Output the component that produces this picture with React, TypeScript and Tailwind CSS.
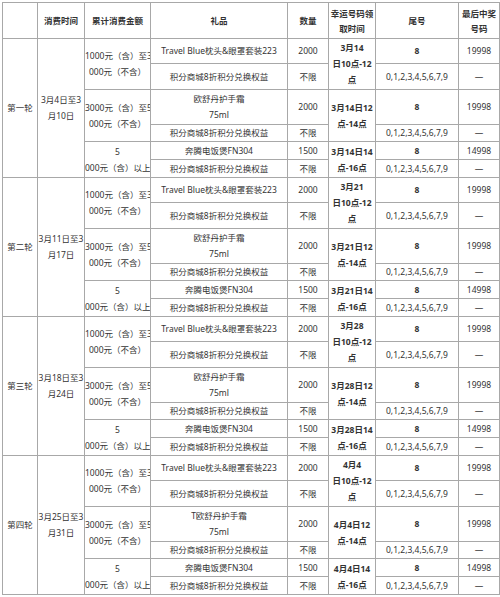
const rounds = [
  {
    name: "第一轮",
    date: ["3月4日至3", "月10日"],
    times: [["3月14", "日10点-12", "点"], ["3月14日12", "点-14点"], ["3月14日14", "点-16点"]],
    lotion: "欧舒丹护手霜",
  },
  {
    name: "第二轮",
    date: ["3月11日至3", "月17日"],
    times: [["3月21", "日10点-12", "点"], ["3月21日12", "点-14点"], ["3月21日14", "点-16点"]],
    lotion: "欧舒丹护手霜",
  },
  {
    name: "第三轮",
    date: ["3月18日至3", "月24日"],
    times: [["3月28", "日10点-12", "点"], ["3月28日12", "点-14点"], ["3月28日14", "点-16点"]],
    lotion: "欧舒丹护手霜",
  },
  {
    name: "第四轮",
    date: ["3月25日至3", "月31日"],
    times: [["4月4", "日10点-12", "点"], ["4月4日12", "点-14点"], ["4月4日14", "点-16点"]],
    lotion: "T欧舒丹护手霜",
  },
];

const amounts = [
  ["1000元（含）至3", "000元（不含）"],
  ["3000元（含）至5", "000元（不含）"],
  ["5", "000元（含）以上"],
];

const cell = "border border-[#a8a8a8] p-0 text-center align-middle";
const POINTS = "积分商城8折积分兑换权益";
const TAILS = "0,1,2,3,4,5,6,7,9";

const Lines = ({ lines, bold = false }: { lines: string[]; bold?: boolean }) => (
  <div className={`overflow-hidden whitespace-nowrap ${bold ? "font-bold" : ""}`}>
    {lines.map((l, i) => (
      <div key={i}>{l}</div>
    ))}
  </div>
);

const Round = ({ r }: { r: (typeof rounds)[number] }) => {
  const gifts = [["Travel Blue枕头&眼罩套装223"], [r.lotion, "75ml"], ["奔腾电饭煲FN304"]];
  const qty = ["2000", "2000", "1500"];
  const last = ["19998", "19998", "14998"];
  const heights = [
    ["h-[25px]", "h-[26px]"],
    ["h-[35px]", "h-[17px]"],
    ["h-[18px]", "h-[18px]"],
  ];
  return (
    <>
      {[0, 1, 2].map((g) => (
        <>
          <tr key={`a${g}`} className={heights[g][0]}>
            {g === 0 && (
              <>
                <td rowSpan={6} className={cell}>
                  {r.name}
                </td>
                <td rowSpan={6} className={cell}>
                  <Lines lines={r.date} />
                </td>
              </>
            )}
            <td rowSpan={2} className={cell}>
              <Lines lines={amounts[g]} />
            </td>
            <td className={cell}>
              <Lines lines={gifts[g]} />
            </td>
            <td className={cell}>{qty[g]}</td>
            <td rowSpan={2} className={cell}>
              <Lines lines={r.times[g]} bold />
            </td>
            <td className={`${cell} font-bold`}>8</td>
            <td className={cell}>{last[g]}</td>
          </tr>
          <tr key={`b${g}`} className={heights[g][1]}>
            <td className={cell}>{POINTS}</td>
            <td className={cell}>不限</td>
            <td className={cell}>{TAILS}</td>
            <td className={cell}>—</td>
          </tr>
        </>
      ))}
    </>
  );
};

export default function App() {
  return (
    <div className="bg-white w-[500px] h-[597px] overflow-hidden pt-[2px] pl-[2px] font-['Noto_Sans','Noto_Sans_CJK_SC',sans-serif] text-[8.5px] leading-[16px] text-[#333]">
      <table className="table-fixed border-collapse w-[497px]">
        <colgroup>
          <col className="w-[35px]" />
          <col className="w-[47px]" />
          <col className="w-[66px]" />
          <col className="w-[137px]" />
          <col className="w-[41px]" />
          <col className="w-[47px]" />
          <col className="w-[83px]" />
          <col className="w-[41px]" />
        </colgroup>
        <thead>
          <tr className="h-[36px] font-bold leading-[15px]">
            <td className={cell}></td>
            <td className={cell}>消费时间</td>
            <td className={cell}>累计消费金额</td>
            <td className={cell}>礼品</td>
            <td className={cell}>数量</td>
            <td className={cell}>
              幸运号码领
              <br />
              取时间
            </td>
            <td className={cell}>尾号</td>
            <td className={cell}>
              最后中奖
              <br />
              号码
            </td>
          </tr>
        </thead>
        <tbody>
          {rounds.map((r) => (
            <Round key={r.name} r={r} />
          ))}
        </tbody>
      </table>
    </div>
  );
}
